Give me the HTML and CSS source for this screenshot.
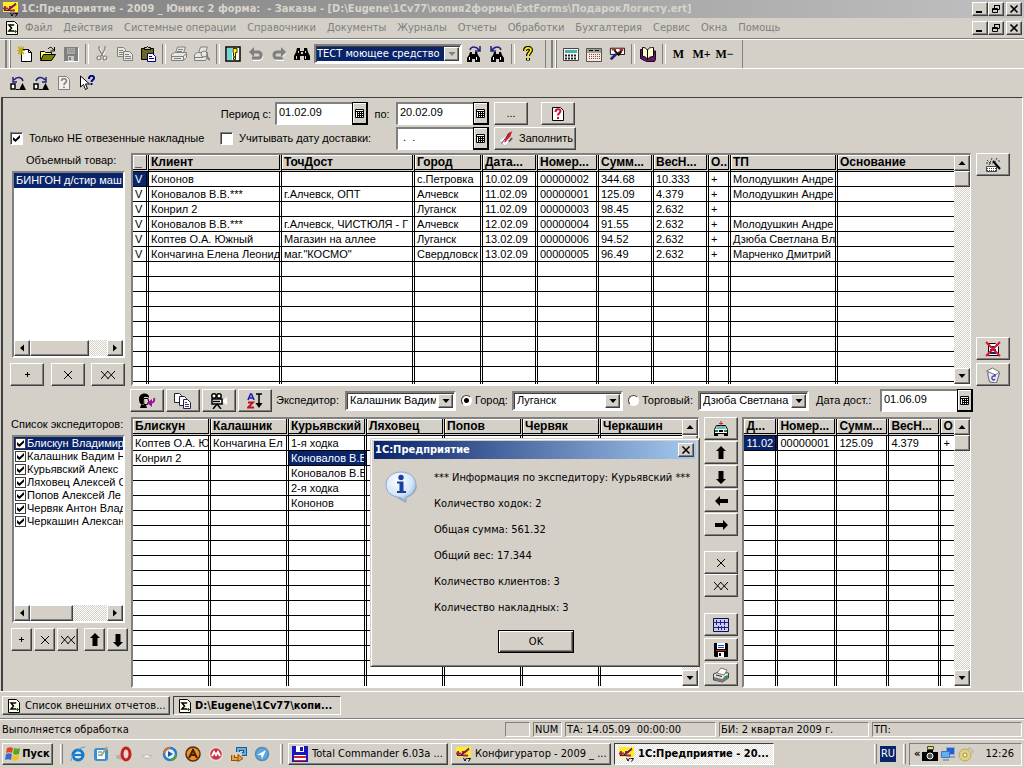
FILE: index.html
```html
<!DOCTYPE html>
<html lang="ru">
<head>
<meta charset="utf-8">
<title>1С:Предприятие</title>
<link rel="stylesheet" href="styles.css">
</head>
<body>
<svg class="sprite" aria-hidden="true">
  <symbol id="logo" viewBox="0 0 16 16"><path fill="#ffee22" d="M1 1h15v10H1z"/><path fill="none" stroke="#b02050" stroke-width="2" d="M1 7.500h5M3 5v5M6 9l8-6M7 6h4M8 9.500h5"/><path fill="none" stroke="#222266" d="M5 10l9-8M2 9.500h6"/><path fill="none" stroke="#000" d="M8.500 12l1.500 3 1.500-3M12.500 12.500h3l-2 3"/></symbol>
  <symbol id="sigma" viewBox="0 0 14 14"><path fill="#fffff0" stroke="#000" d="M1.500.5h8l3 3v10h-11z"/><path fill="none" stroke="#000" stroke-width="1.500" d="M8.500 4.500V4H4l2.500 3L4 10h4.500v-.8"/><path stroke="#206020" d="M9 10.500h3M10.500 9v3"/></symbol>
  <symbol id="new" viewBox="0 0 16 16"><path fill="#fff" stroke="#000" d="M4.500 3.500h7l3 3v9h-10z"/><path fill="none" stroke="#000" d="M11.500 3.500v3h3"/><path stroke="#b8a800" stroke-width="1.200" d="M4 0v9M0 4.500h8M1 1l6 7M7 1L1 8"/></symbol>
  <symbol id="open" viewBox="0 0 16 16"><path fill="#ffff80" stroke="#000" d="M.5 13.500v-8h4l1 1h6v2"/><path fill="#808000" stroke="#000" d="M.5 14.500l3-6h12l-4 6z"/><path fill="none" stroke="#000" d="M8 3c2-2.500 4-2 5.500 1M14.500 1v4h-4"/></symbol>
  <symbol id="save" viewBox="0 0 16 16"><path fill="#808080" d="M1 1h14v14H1z"/><path fill="#a8a8a4" d="M4 2h8v6H4z"/><path fill="#c8c8c4" d="M5 10h6v5H5z"/><path fill="#808080" d="M5 3h1v1H5zM7 3h1v1H7zM9 3h1v1H9zM6 5h1v1H6zM8 5h1v1H8zM10 5h1v1h-1zM6 11h2v3H6z"/><path stroke="#fff" d="M15.500 2v13.500H2" fill="none"/></symbol>
  <symbol id="cut" viewBox="0 0 16 16"><g fill="none" stroke="#fff" transform="translate(1 1)"><path d="M5 1l3 8M11 1L8 9"/><circle cx="5" cy="12" r="2"/><circle cx="11" cy="12" r="2"/></g><g fill="none" stroke="#808080" stroke-width="1.200"><path d="M5 0v3l4 7M11 0v3l-4 7"/><circle cx="5" cy="12" r="2"/><circle cx="11" cy="12" r="2"/></g></symbol>
  <symbol id="copy" viewBox="0 0 16 16"><g fill="#e8e6e0" stroke="#808080"><path d="M.5 1.500h6l2 2v7h-8z"/><path d="M6.500 5.500h6l3 3v6h-9z"/></g><path stroke="#808080" d="M2 4.500h4M2 6.500h4M2 8.500h4M8 8.500h4M8 10.500h6M8 12.500h6"/></symbol>
  <symbol id="paste" viewBox="0 0 16 16"><path fill="#706818" stroke="#000" d="M1.500 2.500h12v11h-12z"/><path fill="#c0c0c0" stroke="#000" d="M4.500 3.500v-2h2l1-1 1 1h2v2z"/><path fill="#fff" stroke="#000080" d="M7.500 7.500h5l3 3v5h-8z"/><path stroke="#000080" d="M9 10.500h3M9 12.500h5"/></symbol>
  <symbol id="print-off" viewBox="0 0 16 16"><g stroke="#808080" fill="#e8e6e0"><path d="M4.500 7l2-6h8l-2 6z"/><path d="M.5 8.500l3-2h12v5l-3 3H.5z"/><path d="M1 10.500h11l3-2.500M3 12.500h7M12.500 10v4M7 3.500h5M6 5.500h5"/></g></symbol>
  <symbol id="preview-off" viewBox="0 0 16 16"><g stroke="#808080" fill="#e8e6e0"><path d="M4.500 7l2-6h7l-2 6z"/><path d="M.5 8.500l3-2h10v5l-2 3H.5z"/><circle cx="10" cy="8" r="3"/><path stroke-width="2" d="M12 10l4 4"/><path d="M1 11.500h8"/></g></symbol>
  <symbol id="key" viewBox="0 0 16 16"><path fill="#fff" stroke="#000" stroke-width="1.500" d="M1 1h14v14H1z"/><path fill="#70d8d8" d="M2 2h5v12H2z"/><path fill="#ff0" stroke="#303000" d="M8 2.500h4v4h-1.500v7H8.500v-2h1v-1h-1v-4H8z"/></symbol>
  <symbol id="undo" viewBox="0 0 16 16"><path fill="none" stroke="#808080" stroke-width="3" d="M5 6h5c4 0 4 6 0 6H4"/><path fill="#808080" d="M6 1v10L1 6z"/><path fill="none" stroke="#fff" d="M5 14.500h6c2 0 4-2 4-4"/></symbol>
  <symbol id="redo" viewBox="0 0 16 16"><path fill="none" stroke="#808080" stroke-width="3" d="M11 6H6c-4 0-4 6 0 6h6"/><path fill="#808080" d="M10 1v10l5-5z"/><path fill="none" stroke="#fff" d="M5 14.500h8M11 11.500l4-4"/></symbol>
  <symbol id="binoc" viewBox="0 0 16 16"><path d="M3 2h3v3h4V2h3l1 4 2 4v4h-6v-4H6v4H0v-4l2-4z"/><path fill="#d4d0c8" d="M7 6h2v2H7zM4 5h1v2H4zM11 5h1v2h-1zM2 10h1v3H2zM11 10h1v3h-1z"/></symbol>
  <symbol id="find-next" viewBox="0 0 16 16"><path d="M4 6h2v2h3V6h2l1 3 2 3v4h-5v-3H6v3H1v-4l2-3z"/><path fill="#fff" d="M3 11h1v3H3zM10 11h1v3h-1z"/><path fill="none" stroke="#202080" stroke-width="1.500" d="M4 4c1-4 6-4 9 0M14 0v5H9"/></symbol>
  <symbol id="find-prev" viewBox="0 0 16 16"><path d="M5 6h2v2h3V6h2l1 3 2 3v4h-5v-3H7v3H2v-4l2-3z"/><path fill="#fff" d="M4 11h1v3H4zM11 11h1v3h-1z"/><path fill="none" stroke="#202080" stroke-width="1.500" d="M12 4c-1-4-6-4-9 0M2 0v5h5"/></symbol>
  <symbol id="help" viewBox="0 0 16 16"><path fill="none" stroke="#000" stroke-width="4" d="M5 5c0-4 6-4 6-1 0 2-3 3-3 6M8 12v2.500"/><path fill="none" stroke="#ffee00" stroke-width="1.800" d="M5 5c0-4 6-4 6-1 0 2-3 3-3 6M8 12v2"/></symbol>
  <symbol id="calc" viewBox="0 0 16 16"><path fill="#f8f8f0" stroke="#444" d="M.5 2.500h15v12H.5z"/><path fill="#40b0b0" d="M2 4h12v3H2z"/><path stroke="#222" stroke-width="2" stroke-dasharray="2 1" d="M2 9.500h12M2 12.500h12"/></symbol>
  <symbol id="calendar" viewBox="0 0 16 16"><path fill="#f0ece0" stroke="#555" d="M.5 2.500h15v13H.5z"/><path fill="#a0a098" d="M1 3h14v4H1z"/><path stroke="#000" d="M3 4.500h4M9 4.500h4"/><path stroke="#a04040" stroke-dasharray="1 1" d="M3 8.500h11M3 10.500h11M3 12.500h11"/></symbol>
  <symbol id="wrench" viewBox="0 0 18 16"><path fill="#fff" stroke="#000" d="M1.500 1.500h16v7h-16z"/><path stroke="#c02020" stroke-width="2" d="M3 3h5M12 3h4M10 7l6-4"/><path fill="none" stroke="#000" stroke-width="2" d="M6 4l5 5 3-4"/><path stroke="#202080" stroke-width="3" d="M2 14l6-6"/></symbol>
  <symbol id="book" viewBox="0 0 16 16"><path fill="#602060" stroke="#200030" d="M.5 3.500v9l6 3h8l1-2V5z"/><path fill="#ffffd0" stroke="#000" d="M2.500 1.500c3 0 4 1 5 3v9c-1-2-2-3-5-3zM7.500 4.500c1-3 3-3 6-3v9c-3 0-5 1-6 3z"/></symbol>
  <symbol id="truck-left" viewBox="0 0 16 16"><path fill="#fff" stroke="#000" stroke-width="1.500" d="M1 9h4v5H1z"/><path d="M12.500 8l3.500 7H9z"/><path stroke="#000" d="M6 14.500h3"/><path fill="none" stroke="#202080" stroke-width="1.500" d="M13 6c-1-4-6-5-9-1M3 2v5h4"/></symbol>
  <symbol id="truck-right" viewBox="0 0 16 16"><path fill="#fff" stroke="#000" stroke-width="1.500" d="M1 9h4v5H1z"/><path d="M12.500 8l3.500 7H9z"/><path stroke="#000" d="M6 14.500h3"/><path fill="none" stroke="#202080" stroke-width="1.500" d="M3 6c1-4 6-5 9-1M13 2v5H9"/></symbol>
  <symbol id="doc-help" viewBox="0 0 16 16"><path fill="#f0eee8" stroke="#808080" d="M2.500 1.500h8l3 3v10h-11z"/><path fill="none" stroke="#808080" stroke-width="1.600" d="M5.500 6c0-3 5-3 5 0 0 2-2.500 1.500-2.500 4M8 11.500v1.500"/></symbol>
  <symbol id="pointer-help" viewBox="0 0 16 16"><path fill="#fff" stroke="#000" d="M1.500 1v11l3-2.500 2 5 2-1-2-4.500h4z"/><path fill="none" stroke="#000080" stroke-width="2" d="M10 4c0-4 5-4 5-1 0 2-2.500 2-2.500 4M12.500 8v2"/></symbol>
  <symbol id="grid" viewBox="0 0 9 9"><path fill="#fff" d="M0 0h9v9H0z"/><path fill="none" stroke="#000" d="M.5.5h8v8h-8zM0 2.500h9M2 4.500h6M2 6.500h6M2.500 3v5M4.500 3v5M6.500 3v5"/></symbol>
  <symbol id="red-help" viewBox="0 0 16 16"><path fill="#fff" stroke="#000" d="M2.500 1.500h8l3 3v10h-11z"/><path fill="none" stroke="#d01030" stroke-width="2" d="M5.500 6c0-3.500 5-3.500 5-1 0 2-2.500 2-2.500 4.500M8 11v2"/></symbol>
  <symbol id="pen" viewBox="0 0 18 18"><path fill="#f8f8ff" stroke="#c0c0d0" d="M1 10l8-5 6 5-7 7z"/><path fill="#d02020" d="M7 12L11 3l5-3-2 6-6 7z"/><path stroke="#602020" d="M13 2L4 14" /><path stroke="#555" stroke-width="2" d="M12 12l4-4"/></symbol>
  <symbol id="wand" viewBox="0 0 16 16"><path fill="#fff" stroke="#444" d="M1.500 9.500h10v5h-10z"/><path stroke="#444" stroke-dasharray="1 1" d="M2 11.500h9M2 13.500h9"/><path stroke="#000" stroke-width="2" d="M8 4l7 8"/><path stroke="#444" stroke-dasharray="2 1" d="M2 3l4 4M7 1L4 8M1 6h7M12 1l-2 4M13 4h3"/></symbol>
  <symbol id="doc-cross" viewBox="0 0 16 16"><path fill="#fff" stroke="#000" d="M3.500 2.500h7l3 3v9h-10z"/><path stroke="#202060" stroke-width="2" d="M5 6h5M5 9h6M5 12h6"/><path stroke="#e01030" stroke-width="2" d="M1 1l14 14M15 1L1 15"/></symbol>
  <symbol id="bin" viewBox="0 0 16 16"><path fill="#e8e8f4" stroke="#666" d="M2.500 6l2 9 7 1 3-10-4-2z"/><path fill="#fff" stroke="#777" d="M1.500 4l6-3 7 4-4 3z"/><path fill="none" stroke="#4040b0" stroke-width="1.300" d="M10 9c-4-1-4 4-1 4l1-1M10 7v2H8"/></symbol>
  <symbol id="face" viewBox="0 0 18 16"><path d="M1 6C1-1 12-1 11 5l-1-1H6L5 8l1 3-2 1C2 11 1 9 1 6z"/><path fill="#e0d0c8" stroke="#000" d="M5.500 5.500h4.500l.5 3-1 3H6z"/><path d="M3 12h5l1 3H2z"/><path fill="none" stroke="#a010a0" stroke-width="2" d="M16 5c1 3 0 5-5 5"/><path fill="#a010a0" d="M9 10l5-4v8z"/></symbol>
  <symbol id="docs" viewBox="0 0 18 16"><g fill="#fff" stroke="#202040"><path d="M.5.5h5l2 2v7h-7z"/><path d="M5.500 3.500h5l2 2v7h-7z"/><path d="M9.500 6.500h4l3 3v6h-7z"/></g><path stroke="#3030a0" d="M11 9.500h2M11 11.500h4M11 13.500h4"/></symbol>
  <symbol id="camera" viewBox="0 0 18 16"><path fill="#fff" stroke="#000" stroke-width="1.500" d="M2 6h10v5H2z"/><circle cx="4" cy="3" r="2.200" fill="#fff" stroke="#000" stroke-width="1.500"/><circle cx="9" cy="3" r="2.200" fill="#fff" stroke="#000" stroke-width="1.500"/><path fill="#fff" d="M13 7l4-3v8l-4-3z"/><path fill="none" stroke="#000" stroke-width="1.500" d="M7 11l-4 5M7 11l4 5M3 8.500h7"/></symbol>
  <symbol id="sort" viewBox="0 0 16 16"><path fill="none" stroke="#2020b0" stroke-width="1.600" d="M1 7l2.500-6h1L7 7M2 5h4"/><path fill="none" stroke="#c01020" stroke-width="1.800" d="M1 9.500h5l-5 5h6"/><path stroke="#000" stroke-width="1.500" d="M9 1h6M12 1v10"/><path d="M8.500 10h7L12 15z"/></symbol>
  <symbol id="car" viewBox="0 0 18 16"><path fill="#fff" stroke="#000" d="M2.500 8.500l2-4h9l2 4v4h-13z"/><path fill="#60c0c0" d="M5 5h8l1 3H4z"/><path d="M2 12h4v3H2zM12 12h4v3h-4zM7 9h4v2H7z"/><path fill="#208040" d="M3 9h3v2H3zM12 9h3v2h-3z"/><path stroke="#e02020" d="M9 0v5M7 2.500h4"/></symbol>
  <symbol id="up" viewBox="0 0 14 14"><path d="M7 0l5 5H9.500v8h-5V5H2z"/></symbol>
  <symbol id="down" viewBox="0 0 14 14"><path d="M7 14L2 9h2.500V1h5v8H12z"/></symbol>
  <symbol id="left" viewBox="0 0 14 14"><path d="M1 7l5-5v3h8v4H6v3z"/></symbol>
  <symbol id="right" viewBox="0 0 14 14"><path d="M14 7L9 2v3H1v4h8v3z"/></symbol>
  <symbol id="cross" viewBox="0 0 8 8"><path fill="none" stroke="#000" d="M0 0l8 8M8 0L0 8"/></symbol>
  <symbol id="cross2" viewBox="0 0 14 8"><path fill="none" stroke="#000" d="M0 0l7.500 8M7 0L0 8M6.500 0L14 8M14 0L6.500 8"/></symbol>
  <symbol id="plus" viewBox="0 0 7 7"><path stroke="#000" d="M1 3.500h5M3.500 1v5"/></symbol>
  <symbol id="plan" viewBox="0 0 16 14"><path fill="#c8ccf0" stroke="#101040" d="M.5.5h15v13H.5z"/><path stroke="#202080" d="M0 4.500h16M0 9.500h16M3.500 2v5M7.500 2v5M11.500 2v5M5.500 8v4M8.500 8v4M11.500 8v4"/></symbol>
  <symbol id="floppy" viewBox="0 0 16 16"><path d="M1 1h13l1 1v13H2l-1-1z"/><path fill="#fff" d="M4 1h8v6H4zM5 10h6v5H5z"/><path stroke="#2040d0" d="M5 3.500h6M5 5.500h6"/><path stroke="#c02020" d="M3 8.500h10"/><path d="M6 11h2v3H6z"/></symbol>
  <symbol id="printer" viewBox="0 0 18 16"><path fill="#e4e4e0" stroke="#444" d="M1.500 7l5-2 10 1v5l-6 4-9-2z"/><path fill="#fff" stroke="#777" d="M5 6l4-5 6 2-3 5z"/><path fill="#777" d="M2 10l8 2 6-4v3l-6 4-8-2z"/><path stroke="#10a050" stroke-width="2" d="M12 11l3-2"/><path stroke="#222" d="M4 8l6 1.500"/></symbol>
  <symbol id="sb-up" viewBox="0 0 8 8"><path d="M4 2l3.500 4h-7z"/></symbol>
  <symbol id="sb-down" viewBox="0 0 8 8"><path d="M4 6L.5 2h7z"/></symbol>
  <symbol id="sb-left" viewBox="0 0 8 8"><path d="M2 4l4-3.500v7z"/></symbol>
  <symbol id="sb-right" viewBox="0 0 8 8"><path d="M6 4L2 .5v7z"/></symbol>
  <symbol id="w-min" viewBox="0 0 10 10"><path d="M1 7h6v2H1z"/></symbol>
  <symbol id="w-max" viewBox="0 0 10 10"><path fill="none" stroke="#000" d="M3.500 4V1.500h5v4H7M3 1.500h6M1.500 4.500h5v4h-5zM1 5.500h6"/></symbol>
  <symbol id="w-close" viewBox="0 0 10 10"><path stroke="#000" stroke-width="1.600" d="M1.500 1.500l7 7M8.500 1.500l-7 7"/></symbol>
  <symbol id="flag" viewBox="0 0 16 16"><path fill="#e04818" d="M2 2c2-1 4-1 6 0l-1 5c-2-1-4-1-6 0z"/><path fill="#50a820" d="M9 2c2 1 4 1 6 0l-1 6c-2 1-4 1-6 0z"/><path fill="#3868d0" d="M1 8c2-1 4-1 6 0l-1 6c-2-1-4-1-6 0z"/><path fill="#f8c010" d="M8 9c2 1 4 1 6 0l-1 5c-2 1-4 1-6 0z"/></symbol>
  <symbol id="ie" viewBox="0 0 16 16"><circle cx="8" cy="9" r="5" fill="#d0e8f8" stroke="#1878c8" stroke-width="3"/><path stroke="#1878c8" stroke-width="2" d="M4 9h9"/><path fill="none" stroke="#40a0e0" d="M1 15C2 8 10 1 15 1"/></symbol>
  <symbol id="desk" viewBox="0 0 16 16"><rect x="1" y="2" width="14" height="13" rx="3" fill="#3890d0"/><path fill="#fff" d="M4 4h8v9H4z"/><path fill="none" stroke="#2070b0" d="M5 6h4M5 9h4"/><path stroke="#b0a070" stroke-width="2" d="M14 1L8 10"/></symbol>
  <symbol id="opera" viewBox="0 0 16 16"><ellipse cx="5" cy="11" rx="5" ry="2.500" fill="#b8b0ac"/><ellipse cx="10" cy="8" rx="4" ry="6" fill="#e8d8d0" stroke="#c82020" stroke-width="3"/></symbol>
  <symbol id="bird" viewBox="0 0 16 16"><path fill="#f4f4f4" stroke="#b8b8b8" d="M3 9l3 1 2-2 2 2 3-1-2 3H5z"/></symbol>
  <symbol id="play" viewBox="0 0 16 16"><circle cx="8" cy="8" r="6" fill="#e8f4ff" stroke="#3078c8" stroke-width="2.500"/><path fill="none" stroke="#e07020" stroke-width="2" d="M2 7c1-4 3-5 6-5"/><path fill="none" stroke="#50a030" stroke-width="2" d="M14 8c0 3-2 6-6 6"/><path fill="#2050a8" d="M6 5l5 3-5 3z"/></symbol>
  <symbol id="aimp" viewBox="0 0 16 16"><circle cx="8" cy="8" r="7" fill="#f09020" stroke="#503018" stroke-width="1.500"/><path fill="none" stroke="#402008" stroke-width="2" d="M4 12l4-8 4 8M6 9h4"/></symbol>
  <symbol id="redball" viewBox="0 0 16 16"><circle cx="8" cy="8" r="6.500" fill="#d03040" stroke="#e8d8d8" stroke-width="1.500"/><path fill="none" stroke="#fff" stroke-width="2" d="M4 10l2-4 2 3 2-3 2 4"/></symbol>
  <symbol id="swap" viewBox="0 0 16 16"><path fill="none" stroke="#205890" stroke-width="4" d="M7 6V3h7v5h-3"/><path fill="none" stroke="#60b0e0" stroke-width="2" d="M7 6V3h7v5h-3"/><path fill="none" stroke="#905010" stroke-width="4" d="M2 9v4h5"/><path fill="none" stroke="#f0a030" stroke-width="2" d="M2 9v4h6"/><path fill="#f0a030" stroke="#905010" d="M7 8.500l5 4-5 3z"/></symbol>
  <symbol id="compass" viewBox="0 0 16 16"><circle cx="8" cy="8" r="6.500" fill="#58a8e8" stroke="#6088a8" stroke-width="1.500"/><path fill="#fff" d="M3 9l9-5-4 9-1-4z"/></symbol>
  <symbol id="tc" viewBox="0 0 16 16"><path fill="#1818c0" d="M0 0h16v16H0z"/><path fill="#fff" d="M4 0h8v6H4zM2 9h12v6H2z"/><path fill="#1818c0" d="M8 1h3v4H8z"/><path fill="#d02020" d="M2 10h12v2H2zM2 14h12v1H2z"/></symbol>
  <symbol id="cam-tray" viewBox="0 0 16 16"><path fill="#e8e040" stroke="#444" d="M5.500.5h6v3h-6z"/><path d="M0 6h5V4h6v2h5v9H0z"/><circle cx="8" cy="10" r="3" fill="#555" stroke="#fff"/></symbol>
  <symbol id="net" viewBox="0 0 16 16"><path fill="#2060d0" stroke="#88a8d8" d="M6.500 1.500h8v7h-8z"/><path fill="#60b0f8" stroke="#5070b0" d="M1.500 5.500h8v6h-8z"/><path fill="#90a0b8" d="M3 13h6v2H3zM10 10h5v2h-5z"/></symbol>
  <symbol id="cd" viewBox="0 0 16 16"><circle cx="7" cy="9" r="6" fill="#e0d080" stroke="#b8a860"/><circle cx="7" cy="9" r="2" fill="#f8f4e0" stroke="#a09040"/><path fill="none" stroke="#b0a888" d="M10 2c3 0 5 2 5 5"/></symbol>
  <symbol id="info" viewBox="0 0 32 32"><defs><radialGradient id="bubble" cx=".4" cy=".3" r=".8"><stop offset="0" stop-color="#fff"/><stop offset=".6" stop-color="#d4e4f8"/><stop offset="1" stop-color="#7098d0"/></radialGradient></defs><path fill="#908c88" opacity=".6" d="M12 27l9 5v-5c7-2 11-7 11-13l-3 6z"/><path fill="url(#bubble)" stroke="#88a8d0" d="M16 1c8.500 0 15 5.500 15 13 0 6-4 10-10 12v5l-6-4.500C7 26 1 21 1 14 1 6.500 7.500 1 16 1z"/><circle cx="16" cy="6.500" r="2.700" fill="#1840a0"/><path fill="#1840a0" d="M12 10.500h6.500V20H21v2h-9v-2h2.500v-7.500H12z"/></symbol>
</svg>

<header class="titlebar">
  <svg class="i16"><use href="#logo"/></svg>
  <h1>1С:Предприятие - 2009 _ Юникс 2 форма:&nbsp; - Заказы - [D:\Eugene\1Cv77\копия2формы\ExtForms\ПодарокЛогисту.ert]</h1>
  <div class="winbtns"><button aria-label="Свернуть"><svg><use href="#w-min"/></svg></button><button aria-label="Восстановить"><svg><use href="#w-max"/></svg></button><button aria-label="Закрыть"><svg><use href="#w-close"/></svg></button></div>
</header>

<nav class="menubar">
  <svg class="i14"><use href="#sigma"/></svg>
  <button>Файл</button><button>Действия</button><button>Системные операции</button><button>Справочники</button><button>Документы</button><button>Журналы</button><button>Отчеты</button><button>Обработки</button><button>Бухгалтерия</button><button>Сервис</button><button>Окна</button><button>Помощь</button>
  <div class="winbtns"><button aria-label="Свернуть"><svg><use href="#w-min"/></svg></button><button aria-label="Восстановить"><svg><use href="#w-max"/></svg></button><button aria-label="Закрыть"><svg><use href="#w-close"/></svg></button></div>
</nav>

<div class="toolbar">
  <div class="tgroup">
    <i class="grip"></i>
    <button aria-label="Новый"><svg><use href="#new"/></svg></button><button aria-label="Открыть"><svg><use href="#open"/></svg></button><button aria-label="Сохранить"><svg><use href="#save"/></svg></button><i class="sep"></i>
    <button aria-label="Вырезать"><svg><use href="#cut"/></svg></button><button aria-label="Копировать"><svg><use href="#copy"/></svg></button><button aria-label="Вставить"><svg><use href="#paste"/></svg></button><i class="sep"></i>
    <button aria-label="Печать"><svg><use href="#print-off"/></svg></button><button aria-label="Просмотр"><svg><use href="#preview-off"/></svg></button><i class="sep"></i>
    <button aria-label="Ключ"><svg><use href="#key"/></svg></button><button aria-label="Отменить"><svg><use href="#undo"/></svg></button><button aria-label="Вернуть"><svg><use href="#redo"/></svg></button><button aria-label="Найти"><svg><use href="#binoc"/></svg></button>
    <div class="combo search"><select aria-label="Строка поиска"><option>ТЕСТ моющее средство</option></select><span class="drop"><svg><use href="#sb-down"/></svg></span></div>
    <button aria-label="Найти далее"><svg><use href="#find-next"/></svg></button><button aria-label="Найти ранее"><svg><use href="#find-prev"/></svg></button><i class="sep"></i>
    <button aria-label="Справка"><svg><use href="#help"/></svg></button>
  </div>
  <div class="tgroup">
    <i class="grip"></i>
    <button aria-label="Калькулятор"><svg><use href="#calc"/></svg></button><button aria-label="Календарь"><svg><use href="#calendar"/></svg></button><button aria-label="Настройка"><svg><use href="#wrench"/></svg></button><i class="sep"></i>
    <button aria-label="Книга"><svg><use href="#book"/></svg></button><i class="sep"></i>
    <button class="mem">M</button><button class="mem">M+</button><button class="mem">M−</button>
  </div>
</div>
<div class="toolbar second">
  <button aria-label="Назад"><svg><use href="#truck-left"/></svg></button><button aria-label="Вперед"><svg><use href="#truck-right"/></svg></button><button aria-label="Описание"><svg><use href="#doc-help"/></svg></button><button aria-label="Что это"><svg><use href="#pointer-help"/></svg></button>
</div>

<main class="form">
  <div class="filters">
    <div class="frow">
      <label class="from" for="d1">Период с:</label>
      <span class="date"><input id="d1" value="01.02.09"><button aria-label="Календарь"><svg><use href="#grid"/></svg></button></span>
      <label class="to" for="d2">по:</label>
      <span class="date"><input id="d2" value="20.02.09"><button aria-label="Календарь"><svg><use href="#grid"/></svg></button></span>
      <button class="btn dots">...</button>
      <button class="btn ask" aria-label="Помощь"><svg class="i16"><use href="#red-help"/></svg></button>
    </div>
    <div class="frow">
      <label class="check only"><input type="checkbox" checked>Только НЕ отвезенные накладные</label>
      <label class="check deliv"><input type="checkbox">Учитывать дату доставки:</label>
      <span class="date"><input aria-label="Дата доставки" value=" .  ."><button aria-label="Календарь"><svg><use href="#grid"/></svg></button></span>
      <button class="btn fill"><svg class="i18"><use href="#pen"/></svg>Заполнить</button>
    </div>
  </div>

  <section class="upper">
    <div class="side">
      <div class="caption goods">Объемный товар:</div>
      <div class="list"><div class="items"><div class="item sel wide">БИНГОН д/стир маш</div></div>
        <div class="hbar"><button aria-label="Влево"><svg><use href="#sb-left"/></svg></button><span class="thumb big"></span><button class="end" aria-label="Вправо"><svg><use href="#sb-right"/></svg></button></div></div>
      <div class="btnrow"><button class="btn" aria-label="Добавить"><svg class="i7"><use href="#plus"/></svg></button><button class="btn" aria-label="Удалить"><svg class="i8"><use href="#cross"/></svg></button><button class="btn" aria-label="Удалить все"><svg class="x2"><use href="#cross2"/></svg></button></div>
    </div>
    <div class="gridbox main">
      <div class="gridwrap"><table class="grid">
        <colgroup><col class="c16"><col class="c133"><col class="c133"><col class="c68"><col class="c55"><col class="c61"><col class="c55"><col class="c55"><col class="c22"><col class="c107"><col></colgroup>
        <thead><tr><th>_</th><th>Клиент</th><th>ТочДост</th><th>Город</th><th>Дата...</th><th>Номер...</th><th>Сумм...</th><th>ВесН...</th><th>О..</th><th>ТП</th><th>Основание</th></tr></thead>
        <tbody>
        <tr><td class="sel">V</td><td>Кононов</td><td></td><td>с.Петровка</td><td>10.02.09</td><td>00000002</td><td>344.68</td><td>10.333</td><td>+</td><td>Молодушкин Андре</td><td></td></tr>
        <tr><td>V</td><td>Коновалов В.В.***</td><td>г.Алчевск, ОПТ</td><td>Алчевск</td><td>11.02.09</td><td>00000001</td><td>125.09</td><td>4.379</td><td>+</td><td>Молодушкин Андре</td><td></td></tr>
        <tr><td>V</td><td>Конрил 2</td><td></td><td>Луганск</td><td>11.02.09</td><td>00000003</td><td>98.45</td><td>2.632</td><td>+</td><td></td><td></td></tr>
        <tr><td>V</td><td>Коновалов В.В.***</td><td>г.Алчевск, ЧИСТЮЛЯ - Г</td><td>Алчевск</td><td>12.02.09</td><td>00000004</td><td>91.55</td><td>2.632</td><td>+</td><td>Молодушкин Андре</td><td></td></tr>
        <tr><td>V</td><td>Коптев О.А. Южный</td><td>Магазин на аллее</td><td>Луганск</td><td>13.02.09</td><td>00000006</td><td>94.52</td><td>2.632</td><td>+</td><td>Дзюба Светлана Вл</td><td></td></tr>
        <tr><td>V</td><td>Кончагина Елена Леонид</td><td>маг."КОСМО"</td><td>Свердловск</td><td>13.02.09</td><td>00000005</td><td>96.49</td><td>2.632</td><td>+</td><td>Марченко Дмитрий</td><td></td></tr>
        <tr class="rest"><td></td><td></td><td></td><td></td><td></td><td></td><td></td><td></td><td></td><td></td><td></td></tr>
        </tbody></table></div>
      <div class="vbar"><button aria-label="Вверх"><svg><use href="#sb-up"/></svg></button><span class="thumb"></span><button class="end" aria-label="Вниз"><svg><use href="#sb-down"/></svg></button></div>
    </div>
    <div class="tools">
      <button class="btn" aria-label="Мастер"><svg class="i16"><use href="#wand"/></svg></button>
      <button class="btn push" aria-label="Удалить документ"><svg class="i16"><use href="#doc-cross"/></svg></button>
      <button class="btn" aria-label="Корзина"><svg class="i16"><use href="#bin"/></svg></button>
    </div>
  </section>

  <section class="strip">
    <button class="btn" aria-label="Экспедитор"><svg class="i18"><use href="#face"/></svg></button>
    <button class="btn" aria-label="Документы"><svg class="i18"><use href="#docs"/></svg></button>
    <button class="btn" aria-label="Камера"><svg class="i18"><use href="#camera"/></svg></button>
    <button class="btn" aria-label="Сортировка"><svg class="i16"><use href="#sort"/></svg></button>
    <label class="exp" for="s1">Экспедитор:</label>
    <div class="combo w111"><select id="s1"><option>Калашник Вадим</option></select><span class="drop"><svg><use href="#sb-down"/></svg></span></div>
    <label class="radio city"><input type="radio" name="by" checked>Город:</label>
    <div class="combo w111"><select aria-label="Город"><option>Луганск</option></select><span class="drop"><svg><use href="#sb-down"/></svg></span></div>
    <label class="radio agent"><input type="radio" name="by">Торговый:</label>
    <div class="combo w111"><select aria-label="Торговый"><option>Дзюба Светлана</option></select><span class="drop"><svg><use href="#sb-down"/></svg></span></div>
    <label class="when" for="d4">Дата дост.:</label>
    <span class="date"><input id="d4" value="01.06.09"><button aria-label="Календарь"><svg><use href="#grid"/></svg></button></span>
  </section>

  <section class="lower">
    <div class="side">
      <div class="caption">Список экспедиторов:</div>
      <div class="list tall"><div class="items">
        <label class="item sel"><input type="checkbox" checked>Блискун Владимир</label>
        <label class="item"><input type="checkbox" checked>Калашник Вадим Н</label>
        <label class="item"><input type="checkbox" checked>Курьявский Алекс</label>
        <label class="item"><input type="checkbox" checked>Ляховец Алексей С</label>
        <label class="item"><input type="checkbox" checked>Попов Алексей Ле</label>
        <label class="item"><input type="checkbox" checked>Червяк Антон Влад</label>
        <label class="item"><input type="checkbox" checked>Черкашин Алексан</label></div>
        <div class="hbar"><button aria-label="Влево"><svg><use href="#sb-left"/></svg></button><span class="thumb"></span><button class="end" aria-label="Вправо"><svg><use href="#sb-right"/></svg></button></div></div>
      <div class="btnrow small"><button class="btn" aria-label="Добавить"><svg class="i7"><use href="#plus"/></svg></button><button class="btn" aria-label="Удалить"><svg class="i8"><use href="#cross"/></svg></button><button class="btn" aria-label="Удалить все"><svg class="x2"><use href="#cross2"/></svg></button><button class="btn gap" aria-label="Вверх"><svg class="i14"><use href="#up"/></svg></button><button class="btn" aria-label="Вниз"><svg class="i14"><use href="#down"/></svg></button></div>
    </div>
    <div class="gridbox plan">
      <div class="gridwrap"><table class="grid">
        <colgroup><col class="c78"><col class="c78"><col class="c78"><col class="c78"><col class="c78"><col class="c78"><col></colgroup>
        <thead><tr><th>Блискун</th><th>Калашник</th><th>Курьявский</th><th>Ляховец</th><th>Попов</th><th>Червяк</th><th>Черкашин</th></tr></thead>
        <tbody>
        <tr><td>Коптев О.А. Ю</td><td>Кончагина Ел</td><td>1-я ходка</td><td></td><td></td><td></td><td></td></tr>
        <tr><td>Конрил 2</td><td></td><td class="sel">Коновалов В.В</td><td></td><td></td><td></td><td></td></tr>
        <tr><td></td><td></td><td>Коновалов В.В</td><td></td><td></td><td></td><td></td></tr>
        <tr><td></td><td></td><td>2-я ходка</td><td></td><td></td><td></td><td></td></tr>
        <tr><td></td><td></td><td>Кононов</td><td></td><td></td><td></td><td></td></tr>
        <tr class="rest"><td></td><td></td><td></td><td></td><td></td><td></td><td></td></tr>
        </tbody></table></div>
      <div class="vbar"><button aria-label="Вверх"><svg><use href="#sb-up"/></svg></button><span class="thumb"></span><button class="end" aria-label="Вниз"><svg><use href="#sb-down"/></svg></button></div>
    </div>
    <div class="mid">
      <div class="stack"><button class="btn" aria-label="Машина"><svg class="i18"><use href="#car"/></svg></button><button class="btn" aria-label="Вверх"><svg class="i14"><use href="#up"/></svg></button><button class="btn" aria-label="Вниз"><svg class="i14"><use href="#down"/></svg></button><button class="btn" aria-label="Влево"><svg class="i14"><use href="#left"/></svg></button><button class="btn" aria-label="Вправо"><svg class="i14"><use href="#right"/></svg></button></div>
      <div class="stack tight"><button class="btn" aria-label="Удалить"><svg class="i8"><use href="#cross"/></svg></button><button class="btn" aria-label="Удалить все"><svg class="x2"><use href="#cross2"/></svg></button></div>
      <div class="stack loose"><button class="btn" aria-label="План"><svg class="i16"><use href="#plan"/></svg></button><button class="btn" aria-label="Сохранить"><svg class="i16"><use href="#floppy"/></svg></button><button class="btn" aria-label="Печать"><svg class="i18"><use href="#printer"/></svg></button></div>
    </div>
    <div class="gridbox bills">
      <div class="gridwrap"><table class="grid">
        <colgroup><col class="c34"><col class="c59"><col class="c52"><col class="c52"><col></colgroup>
        <thead><tr><th>Д...</th><th>Номер...</th><th>Сумм...</th><th>ВесН...</th><th>О</th></tr></thead>
        <tbody>
        <tr><td class="sel">11.02</td><td>00000001</td><td>125.09</td><td>4.379</td><td>+</td></tr>
        <tr class="rest"><td></td><td></td><td></td><td></td><td></td></tr>
        </tbody></table></div>
      <div class="vbar"><button aria-label="Вверх"><svg><use href="#sb-up"/></svg></button><span class="thumb"></span><button class="end" aria-label="Вниз"><svg><use href="#sb-down"/></svg></button></div>
    </div>
  </section>
</main>

<div class="windows">
  <button class="win"><svg class="i14"><use href="#sigma"/></svg>Список внешних отчетов...</button>
  <button class="win active"><svg class="i14"><use href="#sigma"/></svg>D:\Eugene\1Cv77\копи...</button>
</div>

<footer class="status">
  <span class="msg">Выполняется обработка</span>
  <span class="pane p1"></span><span class="pane p2">NUM</span><span class="pane p3">ТА: 14.05.09&nbsp; 00:00:00</span><span class="pane p4">БИ: 2 квартал 2009 г.</span><span class="pane p4">ТП:</span>
</footer>

<nav class="taskbar">
  <button class="start"><svg class="i16"><use href="#flag"/></svg>Пуск</button>
  <i class="bar"></i>
  <div class="quick">
    <button aria-label="Internet Explorer"><svg><use href="#ie"/></svg></button><button aria-label="Рабочий стол"><svg><use href="#desk"/></svg></button><button aria-label="Opera"><svg><use href="#opera"/></svg></button><button aria-label="Bird"><svg><use href="#bird"/></svg></button><button aria-label="Media Player"><svg><use href="#play"/></svg></button><button aria-label="AIMP"><svg><use href="#aimp"/></svg></button><button aria-label="Miranda"><svg><use href="#redball"/></svg></button><button aria-label="Обмен"><svg><use href="#swap"/></svg></button><button aria-label="Компас"><svg><use href="#compass"/></svg></button>
  </div>
  <i class="bar"></i>
  <div class="tasks">
    <button class="task"><svg class="i16"><use href="#tc"/></svg>Total Commander 6.03a ...</button>
    <button class="task"><svg class="i16"><use href="#logo"/></svg>Конфигуратор - 2009 _ ...</button>
    <button class="task active"><svg class="i16"><use href="#logo"/></svg>1С:Предприятие - 20...</button>
  </div>
  <i class="bar"></i>
  <span class="lang">RU</span>
  <i class="bar"></i>
  <div class="tray"><b>«</b><svg class="i16"><use href="#cam-tray"/></svg><svg class="i16"><use href="#net"/></svg><svg class="i16"><use href="#cd"/></svg><time>12:26</time></div>
</nav>

<div class="dialog" role="dialog" aria-labelledby="dt">
  <div class="dtitle"><h2 id="dt">1С:Предприятие</h2><button aria-label="Закрыть"><svg><use href="#w-close"/></svg></button></div>
  <div class="dbody">
    <svg class="i32"><use href="#info"/></svg>
    <div class="dtext"><p>*** Информация по экспедитору: Курьявский ***</p><p>Количество ходок: 2</p><p>Общая сумма: 561.32</p><p>Общий вес: 17.344</p><p>Количество клиентов: 3</p><p>Количество накладных: 3</p></div>
  </div>
  <button class="ok">OK</button>
</div>
</body>
</html>
```
FILE: styles.css
```css
* { box-sizing: border-box; }
:root {
  --face: #d4d0c8;
  --shade: #808080;
  --dark: #404040;
  --navy: #0a246a;
  --ui: "DejaVu Sans Condensed", "DejaVu Sans", sans-serif;
  --sans: "Liberation Sans", Arial, sans-serif;
}
body {
  margin: 0;
  height: 100vh;
  overflow: hidden;
  display: flex;
  flex-direction: column;
  position: relative;
  background: var(--face);
  color: #000;
  font: 11px/14px var(--ui);
  white-space: nowrap;
}
h1, h2, p { margin: 0; font-size: 11px; }
button, input, select { font: inherit; color: inherit; margin: 0; border-radius: 0; }
button { padding: 0; border: 0; background: none; display: flex; align-items: center; justify-content: center; white-space: nowrap; }
svg { display: block; flex: none; overflow: visible; }
.sprite { position: absolute; width: 0; height: 0; }
.i7 { width: 7px; height: 7px; }
.i8 { width: 8px; height: 8px; }
.x2 { width: 14px; height: 8px; }
.i14 { width: 14px; height: 14px; }
.i16 { width: 16px; height: 16px; }
.i18 { width: 18px; height: 16px; }
.i32 { width: 32px; height: 32px; }

/* Window chrome */
.titlebar {
  height: 18px;
  flex: none;
  display: flex;
  align-items: center;
  gap: 3px;
  padding: 0 2px;
  background: linear-gradient(to right, #808080, #c0c0c0);
  color: #d8d4cc;
}
.titlebar h1 { flex: 1; overflow: hidden; }
.winbtns { display: flex; margin-left: auto; flex: none; }
.winbtns button, .dtitle button {
  width: 16px;
  height: 14px;
  background: var(--face);
  color: #000;
  border: 1px solid;
  border-color: #fff var(--dark) var(--dark) #fff;
  box-shadow: inset -1px -1px var(--shade);
}
.winbtns button:last-child { margin-left: 2px; }
.winbtns svg, .dtitle button svg { width: 10px; height: 10px; }
.menubar {
  height: 21px;
  flex: none;
  display: flex;
  align-items: center;
  padding: 0 2px 0 5px;
  color: var(--shade);
  border-bottom: 1px solid var(--shade);
}
.menubar > button { padding: 0 5px 0 6px; }

/* Toolbars */
.toolbar {
  height: 30px;
  flex: none;
  display: flex;
  align-items: stretch;
  border-top: 1px solid #fff;
  border-bottom: 1px solid #fff;
}
.toolbar button { width: 23px; flex: none; }
.toolbar button svg { width: 16px; height: 16px; }
.tgroup { display: flex; align-items: stretch; padding: 0 6px 0 5px; border-right: 1px solid var(--shade); }
.grip { width: 6px; margin-right: 2px; border: solid; border-width: 0 1px; border-color: #fff var(--shade); box-shadow: inset -1px 0 #fff, inset 1px 0 var(--shade); }
.sep { width: 8px; flex: none; }
.sep::before { content: ""; display: block; width: 2px; height: 20px; margin: 4px 3px; border-left: 1px solid var(--shade); border-right: 1px solid #fff; }
.toolbar .mem { font: bold 12px "Liberation Serif", serif; }
.toolbar.second { padding-left: 6px; height: 28px; border: 0; }

.combo {
  display: flex;
  height: 20px;
  background: #fff;
  border: 2px solid;
  border-color: var(--shade) #fff #fff var(--shade);
  box-shadow: inset 1px 1px var(--dark);
  padding: 1px;
}
.combo select { appearance: none; border: 0; padding: 0 2px; background: transparent; flex: 1; min-width: 0; outline: 0; overflow: hidden; }
.drop {
  width: 15px;
  display: flex;
  align-items: center;
  justify-content: center;
  background: var(--face);
  border: 1px solid;
  border-color: #fff var(--dark) var(--dark) #fff;
  box-shadow: inset -1px -1px var(--shade);
}
.drop svg { width: 8px; height: 8px; }
.search { width: 148px; align-self: center; margin: 0 0 0 1px; }
.search select { background: var(--navy); color: #fff; padding: 0; }
.search .drop svg { fill: var(--shade); }
.w111 { width: 111px; }

/* Form */
.form {
  flex: 1;
  min-height: 0;
  display: flex;
  flex-direction: column;
  margin: 0 1px;
  border-left: 2px solid var(--dark);
  border-top: 1px solid var(--dark);
  border-right: 1px solid #fff;
  font-family: var(--sans);
  line-height: 13px;
}
.btn {
  width: 34px;
  height: 23px;
  flex: none;
  background: var(--face);
  border: 1px solid;
  border-color: #fff var(--dark) var(--dark) #fff;
  box-shadow: inset -1px -1px var(--shade);
}
.date { display: flex; width: 93px; height: 23px; flex: none; background: #fff; border: 2px solid; border-color: var(--shade) #fff #fff var(--shade); border-width: 2px 0 1px 2px; }
.date input { border: 0; flex: 1; min-width: 0; padding: 0 0 3px 2px; background: transparent; outline: 0; white-space: pre; }
.date button { width: 16px; margin: -2px 0 -1px; background: var(--face); border: 1px solid #000; border-width: 1px 2px 2px 1px; box-shadow: inset 1px 1px #fff; }
.date button svg { width: 9px; height: 9px; }
.filters { padding: 4px 0 0 7px; display: flex; flex-direction: column; gap: 2px; }
.frow { display: flex; align-items: center; height: 23px; }
.from { width: 265px; padding: 2px 4px 0 0; text-align: right; }
.to { width: 28px; padding-top: 2px; text-align: center; }
.dots { margin-left: 5px; }
.ask { margin-left: 13px; }
.fill { width: 82px; margin-left: 5px; gap: 4px; }
.check { display: flex; align-items: center; gap: 6px; }
.check.only { width: 210px; }
.check.deliv { width: 176px; }
input[type=checkbox] {
  appearance: none;
  width: 13px;
  height: 13px;
  flex: none;
  background: #fff;
  border: 1px solid;
  border-color: var(--shade) #fff #fff var(--shade);
  box-shadow: inset 1px 1px var(--dark);
}
input[type=checkbox]:checked::before {
  content: "";
  display: block;
  width: 7px;
  height: 7px;
  margin: 2px;
  background: #000;
  clip-path: polygon(0 30%, 35% 60%, 100% 0, 100% 40%, 35% 100%, 0 70%);
}
.upper { display: flex; height: 233px; margin-top: 3px; flex: none; }
.side { width: 128px; padding-left: 8px; flex: none; display: flex; flex-direction: column; }
.caption { height: 18px; padding-top: 1px; }
.goods { padding-left: 15px; }
.list { display: flex; flex-direction: column; width: 113px; flex: 1; margin-left: 1px; background: #fff; border: 2px solid; border-color: var(--shade) #fff #fff var(--shade); min-height: 0; }
.items { flex: 1; overflow: hidden; }
.item { display: flex; align-items: center; height: 13px; gap: 1px; padding-left: 1px; }
.item.wide { height: 15px; padding-left: 2px; }
.item input[type=checkbox] { width: 11px; height: 11px; box-shadow: none; border-color: var(--dark); }
.item input[type=checkbox]:checked::before { margin: 1px; }
.sel { background: var(--navy); color: #fff; }
.item.sel input { color: #000; }
.hbar, .vbar { display: flex; flex: none; background: repeating-conic-gradient(#fff 0 25%, var(--face) 0 50%) 0 0 / 2px 2px; }
.hbar { height: 16px; }
.vbar { width: 16px; flex-direction: column; }
.hbar button, .vbar button, .thumb {
  width: 16px;
  height: 16px;
  background: var(--face);
  border: 1px solid;
  border-color: #fff var(--dark) var(--dark) #fff;
  box-shadow: inset -1px -1px var(--shade);
}
.hbar svg, .vbar svg { width: 8px; height: 8px; }
.hbar .end { margin-left: auto; }
.vbar .end { margin-top: auto; }
.hbar .thumb { width: 43px; }
.hbar .thumb.big { width: 59px; }
.btnrow { display: flex; justify-content: space-between; width: 115px; margin: 5px 0 0 -1px; }
.btnrow.small { width: 116px; gap: 2px; margin-left: 0; justify-content: flex-start; }
.small .btn { width: 21px; }
.small .gap { margin-left: 4px; }
.lower .btnrow { margin-bottom: 37px; }

.gridbox { display: flex; min-width: 0; background: #fff; border: solid; border-width: 2px 1px 2px 2px; border-color: var(--shade) #fff #fff var(--shade); }
.gridbox.main { flex: 1; }
.gridbox.plan { flex: 569 1 0; }
.gridbox.bills { flex: 227 1 0; }
.gridwrap { flex: 1; min-width: 0; overflow: hidden; }
.grid { width: 100%; height: 100%; table-layout: fixed; border-collapse: separate; border-spacing: 0; }
.grid th, .grid td { padding: 0 0 0 2px; text-align: left; overflow: hidden; border-right: 3px double #000; }
.grid th:last-child, .grid td:last-child { border-right: 0; }
.grid th { height: 17px; line-height: 13px; background: var(--face); border-bottom: 3px double #000; box-shadow: inset 1px 1px #fff; font-weight: bold; font-size: 12px; }
.grid td { height: 15px; line-height: 14px; border-bottom: 1px solid #000; }
.grid .rest td { height: auto; border-bottom: 0; background: repeating-linear-gradient(to bottom, #fff 0 14px, #000 14px 15px); }
.c16 { width: 16px; } .c22 { width: 22px; } .c34 { width: 34px; } .c52 { width: 52px; }
.c55 { width: 55px; } .c59 { width: 59px; } .c61 { width: 61px; } .c68 { width: 68px; }
.c78 { width: 78px; } .c107 { width: 107px; } .c133 { width: 133px; }
.tools { width: 46px; margin-left: 5px; flex: none; display: flex; flex-direction: column; gap: 3px; }
.tools .push { margin-top: auto; }

.strip { display: flex; align-items: center; height: 23px; padding-left: 127px; margin: 3px 0 5px; flex: none; }
.strip > .btn { margin-right: 2px; }
.exp { width: 69px; margin-left: 2px; }
.radio { display: flex; align-items: center; gap: 3px; margin-left: 5px; }
.city { width: 51px; }
.agent { width: 70px; }
.radio input {
  appearance: none;
  width: 11px;
  height: 11px;
  flex: none;
  background: #fff;
  border: 1px solid;
  border-color: var(--dark) #fff #fff var(--dark);
  border-radius: 50%;
}
.radio input:checked { background: radial-gradient(circle, #000 0 2px, #fff 3px); }
.when { width: 64px; margin-left: 7px; }
.lower { display: flex; flex: 1; min-height: 0; padding: 0 51px 3px 0; }
.mid { width: 34px; margin: 0 4px 0 5px; display: flex; flex-direction: column; flex: none; }
.stack { display: flex; flex-direction: column; gap: 1px; }
.stack.tight { margin: 15px 0 16px; gap: 0; }
.stack.loose { gap: 2px; }

/* Open windows and status */
.windows { height: 28px; flex: none; display: flex; gap: 3px; padding: 4px 2px 3px; border-top: 1px solid #fff; border-bottom: 1px solid var(--shade); }
.win { width: 168px; justify-content: flex-start; gap: 4px; padding-left: 4px; border: 1px solid; border-color: #fff var(--dark) var(--dark) #fff; box-shadow: inset -1px -1px var(--shade); }
.win.active { gap: 3px; font-weight: bold; border-color: var(--dark) #fff #fff var(--dark); box-shadow: none; }
.status { height: 21px; flex: none; display: flex; gap: 3px; padding: 2px 2px; border-top: 1px solid #fff; border-bottom: 1px solid #fff; line-height: 16px; }
.msg { flex: 1; }
.pane { border: 1px solid; border-color: var(--shade) #fff #fff var(--shade); padding-left: 1px; line-height: 14px; }
.p1 { width: 25px; } .p2 { width: 29px; } .p3 { width: 151px; } .p4 { width: 150px; }

/* Taskbar */
.taskbar { height: 28px; flex: none; display: flex; align-items: center; padding: 0 2px; }
.start, .task { height: 22px; border: 1px solid; border-color: #fff var(--dark) var(--dark) #fff; box-shadow: inset -1px -1px var(--shade); }
.start { width: 51px; gap: 1px; font-weight: bold; }
.bar { width: 3px; height: 20px; margin: 0 3px 0 7px; border-left: 1px solid #fff; border-right: 1px solid var(--shade); flex: none; }
.quick { display: flex; }
.quick button { width: 23px; }
.quick svg { width: 16px; height: 16px; }
.tasks { display: flex; flex: 1; gap: 3px; margin-left: 2px; }
.task { width: 160px; justify-content: flex-start; gap: 4px; padding-left: 3px; }
.task.active { font-weight: bold; background: repeating-conic-gradient(#fff 0 25%, #e4e1dc 0 50%) 0 0 / 2px 2px; border-color: var(--dark) #fff #fff var(--dark); box-shadow: none; }
.lang { background: var(--navy); color: #fff; padding: 1px 1px; line-height: 14px; }
.tray { display: flex; align-items: center; gap: 2px; height: 23px; width: 113px; padding: 0 7px 0 4px; border: 1px solid; border-color: var(--shade) #fff #fff var(--shade); flex: none; }
.tray time { margin-left: auto; }

/* Message box */
.dialog {
  position: absolute;
  left: 370px;
  top: 438px;
  width: 330px;
  padding: 3px;
  background: var(--face);
  border: 1px solid;
  border-color: var(--face) var(--dark) var(--dark) var(--face);
  box-shadow: inset 1px 1px #fff, inset -1px -1px var(--shade);
}
.dtitle { display: flex; align-items: center; justify-content: space-between; height: 18px; padding: 0 2px 0 1px; margin-top: -1px; color: #fff; background: linear-gradient(to right, #0a246a, #a6caf0); }
.dbody { display: flex; gap: 17px; padding: 12px 0 0 11px; }
.dtext { display: flex; flex-direction: column; gap: 12px; }
.ok { width: 76px; height: 23px; margin: 15px auto 10px 124px; background: var(--face); border: 1px solid #000; box-shadow: inset 1px 1px #fff, inset -1px -1px var(--dark), inset -2px -2px var(--shade); }
```
